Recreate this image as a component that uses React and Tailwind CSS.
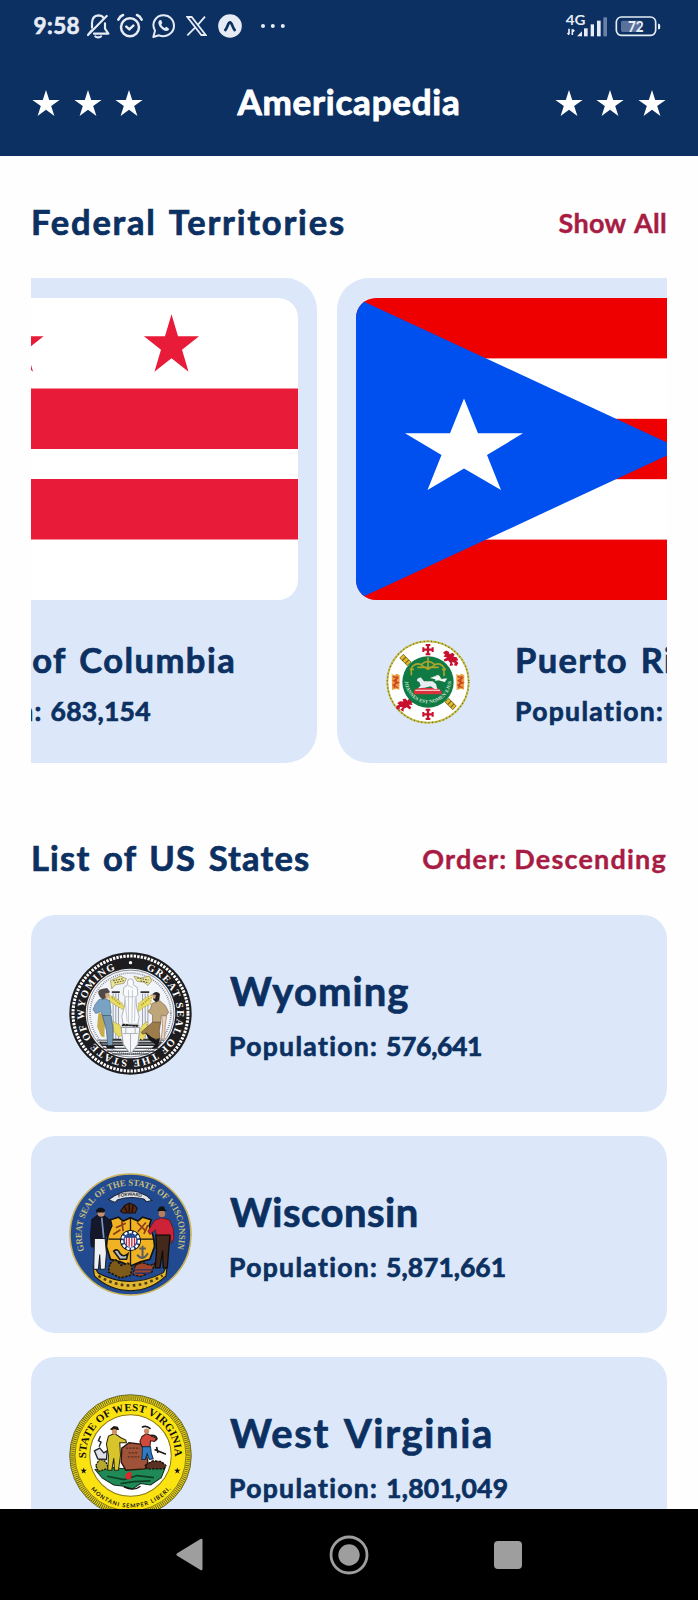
const STAR = '0,-10 2.25,-3.09 9.51,-3.09 3.63,1.18 5.88,8.09 0,3.82 -5.88,8.09 -3.63,1.18 -9.51,-3.09 -2.25,-3.09';

function HeaderStars() {
  return (
    <div className="flex gap-[15.7px] pt-[11px]">
      {[0, 1, 2].map((i) => (
        <svg key={i} className="h-[26px] w-[26px] overflow-visible" viewBox="-10 -10.3 20 20" fill="#fff">
          <polygon points={STAR} transform="scale(1.1)" />
        </svg>
      ))}
    </div>
  );
}

function StatusBar() {
  return (
    <div className="flex h-[52px] items-center pl-[33.5px] pr-[37px] text-[#e6ebf5]">
      <span className="w-[53px] text-[22.5px] font-bold leading-[26px] tracking-[0.4px] [-webkit-text-stroke:0.6px]">9:58</span>
      <svg className="h-[26px] w-[23px]" viewBox="0 0 69 78" fill="none" stroke="currentColor" strokeWidth="6.5" strokeLinecap="round" strokeLinejoin="round">
        <path d="M15 44V30C15 14 24 8 34 7C41 7 47 10 50 15M54 31V47L64 62H21M59 9L3 66L14 52" />
        <path d="M25 70C28 74 39 74 42 70" />
      </svg>
      <svg className="ml-[7.5px] h-[26px] w-[26px]" viewBox="0 0 78 78" fill="none" stroke="currentColor" strokeWidth="7.5" strokeLinecap="round" strokeLinejoin="round">
        <circle cx="39" cy="43" r="27" />
        <path d="M4 20C8 12 12 8 18 6M74 20C70 12 66 8 60 6M28 41L37 49L49 38" />
      </svg>
      <svg className="ml-[9px] h-[24px] w-[23px]" viewBox="0 0 69 72" fill="none" stroke="currentColor" strokeWidth="6" strokeLinejoin="round">
        <path d="M4 69L9 50C-4 27 12 4 35 4C53 4 66 18 66 35C66 58 42 72 21 64Z" />
        <path d="M24 18C17 22 18 31 25 40C33 50 44 55 50 48C53 44 50 42 43 38L38 42C33 40 29 36 28 31L31 27L28 19Z" fill="currentColor" stroke="none" />
      </svg>
      <svg className="ml-[11px] h-[20px] w-[21px]" viewBox="0 0 63 60" fill="none" stroke="currentColor" strokeWidth="5.5">
        <path d="M4 3H17L59 57H46ZM57 2L36 26M28 34L4 58" />
      </svg>
      <svg className="ml-[10.5px] h-[24px] w-[24px]" viewBox="0 0 72 72">
        <circle cx="36" cy="36" r="35.5" fill="currentColor" />
        <path d="M22 48C29 40 30 25 36 25C42 25 43 40 50 48" fill="none" stroke="#0b3061" strokeWidth="8" strokeLinecap="round" />
      </svg>
      <svg className="ml-[18px] h-[6px] w-[26px]" viewBox="0 0 26 6" fill="currentColor">
        <circle cx="3" cy="3" r="2" />
        <circle cx="12.8" cy="3" r="2" />
        <circle cx="22.8" cy="3" r="2" />
      </svg>
      <svg className="ml-auto h-[26px] w-[43px] overflow-visible" viewBox="647 37 129 78" fill="currentColor">
        <text x="649" y="72" fontSize="40" fontWeight="700" textLength="59" lengthAdjust="spacingAndGlyphs">4G</text>
        <path d="M659 84V101M655 96L659 102M669 103V86M669 86L675 92" fill="none" stroke="currentColor" strokeWidth="5" />
        <path d="M683 107L698 92V107Z" />
        <rect x="704" y="83" width="11" height="24" />
        <rect x="724" y="71" width="10" height="36" />
        <rect x="743" y="60" width="11" height="47" />
        <rect x="762" y="50" width="11" height="57" fill="#6a80a4" />
      </svg>
      <svg className="ml-[7.5px] h-[22px] w-[46px]" viewBox="798 43 138 66" fill="none">
        <rect x="802" y="49" width="118" height="55" rx="15" stroke="currentColor" strokeWidth="5" />
        <path d="M820 60H873V94H820Q816 94 816 88V66Q816 60 820 60Z" fill="#5a719b" />
        <path d="M927 69H930Q934 69 934 77Q934 86 930 86H927Z" fill="currentColor" />
        <text x="837" y="93" fontSize="43" fontWeight="900" fill="currentColor" textLength="47" lengthAdjust="spacingAndGlyphs">72</text>
      </svg>
    </div>
  );
}

function DistrictFlag() {
  return (
    <svg className="h-[302px] w-[563px] shrink-0 rounded-[20px]" viewBox="0 0 563 302">
      <rect width="563" height="302" fill="#fff" />
      <rect y="90.5" width="563" height="60.5" fill="#e81b39" />
      <rect y="181" width="563" height="60.5" fill="#e81b39" />
      {[126, 281, 436.5].map((x) => (
        <polygon key={x} points={STAR} fill="#e81b39" transform={`translate(${x} 48) scale(2.9 3.18)`} />
      ))}
    </svg>
  );
}

function PuertoRicoFlag() {
  return (
    <svg className="h-[302px] w-[563px] shrink-0 rounded-[20px]" viewBox="0 0 563 302">
      <rect width="563" height="302" fill="#ee0000" />
      <rect y="60.4" width="563" height="60.4" fill="#fff" />
      <rect y="181.2" width="563" height="60.4" fill="#fff" />
      <polygon points="0,0 325,151 0,302" fill="#0050f0" />
      <polygon points="108,100.5 122,135.3 167,135.3 131,157 145,192 108,170.5 71.500,192 85.500,157 49,135.300 94,135.3" fill="#fff" />
    </svg>
  );
}

function DistrictSeal() {
  return (
    <svg className="h-[84px] w-[84px] shrink-0" viewBox="0 0 84 84">
      <circle cx="42" cy="42" r="41" fill="#fff" stroke="#b99a3a" strokeWidth="2" />
      <circle cx="42" cy="42" r="28" fill="#4a7fb5" />
    </svg>
  );
}

function Lion({ transform }) {
  return (
    <path
      transform={transform}
      fill="#c8102e"
      d="M-20 -16L-12 -22L-4 -19L-2 -12L6 -16L12 -11L8 -6L17 -4L22 4L16 6L22 12L17 20L10 18L12 11L4 9L8 18L-2 20L0 12L-6 5L-16 8L-18 2L-9 -3L-19 -6L-14 -11Z"
    />
  );
}

function PuertoRicoSeal() {
  return (
    <svg className="h-[84px] w-[84px] shrink-0" viewBox="-126 -126 252 252">
      <circle r="122" fill="#fff" stroke="#c9c04a" strokeWidth="6" />
      <circle r="122" fill="none" stroke="#6b6a2a" strokeWidth="4" strokeDasharray="3 8" />
      <path d="M-80 -78L-56 -54M56 54L80 78" stroke="#6b5c14" strokeWidth="17" />
      <path d="M-79 -77L-57 -55M57 55L79 77" stroke="#e0b92c" strokeWidth="14" strokeDasharray="9 3" />
      {[-97, 97].map((y) => (
        <g key={y} transform={`translate(0 ${y})`} stroke="#c8102e" fill="none">
          <path d="M0 -15V15M-15 0H15" strokeWidth="7" />
          <path d="M-7 -14H7M-7 14H7M-14 -7V7M14 -7V7" strokeWidth="6" />
        </g>
      ))}
      {[-97, 97].map((x) => (
        <g key={x} transform={`translate(${x} 0)`}>
          <path d="M-12 -24L-4 -20L4 -25L12 -20L11 23L3 20L-11 24Z" fill="#e9a23a" />
          <path d="M-8 -16L6 -12L-6 -4L8 2L-7 9L7 18M5 -18L-5 18" stroke="#d0402c" strokeWidth="4" fill="none" />
        </g>
      ))}
      <Lion transform="translate(67 -70) scale(1.1)" />
      <Lion transform="translate(-68 68) scale(-1.1 1.1) rotate(-20)" />
      <circle r="77" fill="#0f7a43" />
      <path d="M-50 -20V-42M-50 -42Q-38 -60 -20 -52Q0 -72 20 -52Q38 -60 48 -42V-18M-20 -50L0 -38L20 -50M0 -74V-36M-32 -44H32M-55 -38H-42M42 -38H54" fill="none" stroke="#a9a52c" strokeWidth="5" />
      <path d="M-42 23L-28 18H30L42 30V37H-42Z" fill="#d9323c" />
      <path d="M-38 25H36" stroke="#f3c6c6" strokeWidth="4" />
      <path d="M-32 -10L-22 -14L-12 -2L14 -2L24 6L28 22L18 20L8 13L-10 17L-30 19L-22 11L-26 0L-33 -3Z" fill="#e9edf2" />
      <path d="M8 -12L32 -20L40 -8L56 -10L50 0M26 -20L36 -8L22 -4Z" fill="#fff" stroke="#dfe7e0" strokeWidth="2" />
      <path id="pr-motto" d="M-70 -6A70 70 0 0 0 70 -6" fill="none" />
      <text fontSize="15" fontWeight="700" fill="#cfe6d4" className="font-['Liberation_Serif']">
        <textPath href="#pr-motto" startOffset="4" textLength="212">JOANNES EST NOMEN EJUS</textPath>
      </text>
    </svg>
  );
}

function WyomingSeal() {
  return (
    <svg className="h-[123px] w-[123px] shrink-0" viewBox="-184 -184 368 368">
      <circle r="183" fill="#1d1c1f" />
      <circle r="172" fill="none" stroke="#fff" strokeWidth="9" strokeDasharray="7 3.500" />
      <circle r="134" fill="#f1f4fb" />
      <circle r="130" fill="none" stroke="#55565c" strokeWidth="2" />
      <circle r="121" fill="none" stroke="#6a6b70" strokeWidth="5" strokeDasharray="2 4" />
      <path id="wy-ring" d="M0 -139A139 139 0 0 1 0 139A139 139 0 0 1 0 -139" fill="none" />
      <text fontSize="31" fontWeight="700" fill="#fff" className="font-['Liberation_Serif']">
        <textPath href="#wy-ring" startOffset="47" textLength="780">GREAT SEAL OF THE STATE OF WYOMING</textPath>
      </text>
      <circle cx="0" cy="-152" r="5" fill="#fff" />
      <path d="M-92 86H92L84 96H-84ZM-84 104H84M-70 113H72M-55 121H55" stroke="#222" strokeWidth="3" fill="#6c6e75" />
      <path d="M-100 80H100" stroke="#888b92" strokeWidth="5" />
      <path d="M-52 -60V80M-44 -60V80M-36 -60V80M36 -60V80M44 -60V80M52 -60V80" stroke="#9da1aa" strokeWidth="3" />
      <path d="M-56 -64H-32M30 -64H56M-54 78H-28M28 78H56" stroke="#333" strokeWidth="5" />
      <path d="M-60 -98L-30 -112L-12 -104L-20 -90L-46 -86L-56 -74ZM10 -112L30 -106L56 -112L64 -98L52 -84L40 -94L20 -96Z" fill="#ece59a" stroke="#8b8a4c" strokeWidth="2" />
      <path d="M-52 -98L-24 -104M-48 -92L-20 -98M20 -106L54 -100M30 -98L54 -92" stroke="#55552e" strokeWidth="3" strokeDasharray="5 3" />
      <path d="M-66 -56L-44 -46L-24 -30L-16 -8L-40 -22L-62 -36ZM64 -56L44 -46L24 -30L22 -4L38 -18L60 -28ZM-52 24L-30 36L-22 64L-34 70L-50 54ZM50 24L34 36L24 70L36 80L48 60Z" fill="#eadc63" stroke="#a29841" strokeWidth="2" strokeDasharray="6 3" />
      <path d="M-56 -48L-28 -26M56 -46L30 -22" stroke="#8f8432" strokeWidth="3" strokeDasharray="4 3" />
      <path d="M0 -104Q8 -104 9 -94L8 -86L20 -78L22 -56L16 -50L18 -20L26 10L22 32H-22L-26 8L-18 -22L-16 -50L-22 -58L-20 -78L-8 -86L-9 -94Q-8 -104 0 -104Z" fill="#fafbfd" stroke="#a4a7af" strokeWidth="2.500" />
      <path d="M-8 -84L8 -76M-6 -70V28M6 -70L4 28M-16 -40L-10 24M14 -44L12 24M-14 -50H14" stroke="#bfc2c9" strokeWidth="2.500" />
      <path d="M-26 36H26M-24 33L22 38" stroke="#222" strokeWidth="5" strokeDasharray="8 2" />
      <path d="M-28 42H28L22 92L0 122L-22 92Z" fill="#f6f7fa" stroke="#9b9da5" strokeWidth="3" />
      <path d="M-22 60H22M0 60V120M-14 44V60M14 44V60" stroke="#b0b3ba" strokeWidth="3" />
      <path d="M-96 -2L-76 2L-78 72L-88 68L-100 40Z" fill="#c8ad4e" />
      <path d="M-94 -42Q-108 -28 -112 -12L-104 0L-88 -6L-84 6H-62L-58 -2L-62 -38L-74 -44Z" fill="#78a3c4" stroke="#4c6d86" strokeWidth="2" />
      <path d="M-84 6H-58L-52 48L-54 96H-68L-72 50Z" fill="#7397b5" stroke="#40586c" strokeWidth="2" />
      <path d="M-92 -50Q-104 -68 -86 -73L-70 -76L-62 -66L-68 -48L-84 -42Z" fill="#4f4a47" />
      <path d="M-76 -60L-64 -62L-66 -46L-74 -44Z" fill="#d8a98a" />
      <path d="M-74 96H-50L-46 104H-70Z" fill="#1d1c1f" />
      <path d="M64 -30L88 -38L104 -24L114 -4L106 8L92 4L90 28H66L66 4L52 -6L60 -14Z" fill="#bfa67a" stroke="#7b6848" strokeWidth="2" />
      <path d="M94 6L108 8L104 34L102 76H92L96 40Z" fill="#efd2bb" stroke="#98785e" strokeWidth="2" />
      <path d="M66 26H90L86 52L88 76H66L50 58L36 62L32 56Z" fill="#9c7c4a" stroke="#5e4a2c" strokeWidth="2" />
      <path d="M44 56L62 70L76 78L88 74L82 102L64 106L74 92L56 80Z" fill="#171618" />
      <path d="M66 -58Q78 -70 88 -58L86 -40L76 -34L68 -42Z" fill="#28221f" />
      <path d="M66 -56L76 -56L74 -44L66 -46Z" fill="#d6a587" />
    </svg>
  );
}

function WisconsinSeal() {
  return (
    <svg className="h-[123px] w-[123px] shrink-0" viewBox="-184 -184 368 368">
      <circle r="181" fill="#224a91" stroke="#cdb45a" strokeWidth="5" />
      <path id="wi-ring" d="M-137 50A146 146 0 1 1 137 50" fill="none" />
      <text fontSize="27" fontWeight="700" fill="#c5bd7c" className="font-['Liberation_Serif']">
        <textPath href="#wi-ring" startOffset="2" textLength="552" lengthAdjust="spacingAndGlyphs">GREAT SEAL OF THE STATE OF WISCONSIN</textPath>
      </text>
      <path d="M-66 -104L-48 -116L-26 -126Q0 -134 26 -126L48 -116L64 -102L48 -98L40 -106Q0 -116 -38 -104L-46 -96Z" fill="#dfe3ea" stroke="#1d2438" strokeWidth="3" />
      <path id="wi-banner" d="M-36 -110Q0 -122 38 -110" fill="none" />
      <text fontSize="14" fontWeight="700" fill="#1c1c1c">
        <textPath href="#wi-banner" textLength="70">FORWARD</textPath>
      </text>
      <path d="M-30 -70L-18 -86L-4 -94L12 -88L20 -78L14 -64H-22Z" fill="#58290f" stroke="#160d08" strokeWidth="3" />
      <path d="M-18 -84L-10 -66M-4 -92V-66M8 -88L4 -66" stroke="#1a0e08" strokeWidth="4" />
      <path d="M-60 -44L-36 -52L-22 -40L0 -50L22 -40L36 -52L62 -44L56 -26Q70 0 72 36L58 74L30 82L0 94L-30 82L-60 74L-72 36Q-70 0 -56 -26Z" fill="#f0b323" stroke="#15130f" strokeWidth="5" />
      <path d="M0 -50V92M-66 14H68" stroke="#15130f" strokeWidth="4" />
      <path d="M-44 -20L-14 -34M-26 -40L-22 -10M-52 0L-30 -14M20 -36L46 -10M46 -36L22 -8M52 -28L40 -2" stroke="#8a3a1c" strokeWidth="5" />
      <path d="M-50 50Q-38 40 -32 56Q-22 70 -8 58L-12 74L-32 74Z" fill="#b9bcc4" stroke="#1b1b1b" strokeWidth="5" />
      <path d="M36 34V72M20 60Q36 82 52 56M26 42H46" fill="none" stroke="#5b5c62" strokeWidth="6" />
      <circle cy="18" r="30" fill="#1d3f86" stroke="#111" strokeWidth="3" />
      <circle cy="18" r="25" fill="none" stroke="#fff" strokeWidth="7" strokeDasharray="9 5" />
      <path d="M-17 4H17V22Q14 34 0 40Q-14 34 -17 22Z" fill="#fff" />
      <path d="M-12 8V32M-4 8V37M4 8V37M12 8V32" stroke="#c2263a" strokeWidth="4" />
      <path d="M-17 2H17V10H-17Z" fill="#224a91" />
      <path d="M-112 92L-96 116Q0 166 98 114L110 92L106 124Q60 168 0 168Q-62 168 -108 124Z" fill="#e3b62f" stroke="#15130f" strokeWidth="3" />
      <path d="M-96 124Q0 182 96 122" fill="none" stroke="#4d3d10" strokeWidth="8" strokeDasharray="8 10" />
      <path d="M-62 88L-46 74L-28 92L-8 86L6 96L0 122L-30 130L-66 112Z" fill="#7e5a1a" stroke="#1a140a" strokeWidth="5" strokeDasharray="7 4" />
      <path d="M14 92L34 84L60 92L72 86L64 112L30 126L8 120Z" fill="#9f462a" stroke="#17130d" strokeWidth="4" strokeDasharray="9 3" />
      <path d="M10 106H68M14 116H60" stroke="#27336a" strokeWidth="4" />
      <path d="M-116 -46L-98 -58L-78 -56L-60 -42L-62 -10L-74 8L-78 16H-108L-106 40L-118 36L-120 4Z" fill="#15172a" stroke="#0d0f1c" strokeWidth="2" />
      <path d="M-86 -50L-80 10" stroke="#8298bf" strokeWidth="5" />
      <path d="M-108 12H-76L-72 56L-76 104H-90L-92 60L-96 104H-110Z" fill="#eef0f4" stroke="#191a22" strokeWidth="3" />
      <circle cx="-88" cy="-64" r="11" fill="#c9906c" />
      <path d="M-104 -72Q-92 -88 -76 -74L-78 -66H-102Z" fill="#10121c" />
      <path d="M72 -42L92 -50L116 -44L128 -18L130 12L122 28L118 2H78L74 -14L58 0L52 -10Z" fill="#cc2338" stroke="#4e101b" strokeWidth="2" />
      <path d="M76 2H118L114 50L110 100H98L96 48L88 100H74L78 48Z" fill="#43291c" stroke="#120c08" strokeWidth="4" />
      <circle cx="94" cy="-62" r="10" fill="#b87d5b" />
      <path d="M80 -72L88 -84H100L104 -74L110 -70H80Z" fill="#111" />
    </svg>
  );
}

function WestVirginiaSeal() {
  return (
    <svg className="h-[123px] w-[123px] shrink-0" viewBox="-184 -184 368 368">
      <circle r="182" fill="#e3cf1e" stroke="#3b3a14" strokeWidth="2" />
      <circle r="174" fill="none" stroke="#4a4715" strokeWidth="13" strokeDasharray="2 4" />
      <circle r="166" fill="#fbe211" stroke="#55501a" strokeWidth="2" />
      <circle r="122" fill="#fff" stroke="#8a7a10" strokeWidth="3" />
      <path id="wv-top" d="M-132 16A133 133 0 1 1 132 16" fill="none" />
      <text fontSize="32" fontWeight="700" fill="#111" className="font-['Liberation_Serif']">
        <textPath href="#wv-top" startOffset="8" textLength="430" lengthAdjust="spacingAndGlyphs">STATE OF WEST VIRGINIA</textPath>
      </text>
      <path id="wv-bottom" d="M-121 98A156 156 0 0 0 128 90" fill="none" />
      <text fontSize="17" fontWeight="700" fill="#111">
        <textPath href="#wv-bottom" startOffset="4" textLength="272">MONTANI SEMPER LIBERI.</textPath>
      </text>
      <polygon points={STAR} transform="translate(-140 46)" fill="#111" />
      <polygon points={STAR} transform="translate(140 46)" fill="#111" />
      <path d="M-106 42L-70 34L-20 40L60 30L104 36L92 66L60 88L30 84L6 100L-20 92L-50 88L-84 68Z" fill="#1f8a55" stroke="#10301f" strokeWidth="3" />
      <path d="M-70 62L-20 72L20 60L70 66M-30 84L10 78L60 76" stroke="#0e3f26" strokeWidth="5" fill="none" />
      <path d="M-26 -22L-4 -38L30 -34L46 -14L52 20L44 40L-14 44L-28 20Z" fill="#9f5439" stroke="#2c150c" strokeWidth="4" />
      <path d="M-14 -22H28M-6 -8H20M-8 4H26" stroke="#5f2c1b" strokeWidth="4" strokeDasharray="7 3" />
      <path d="M44 30L66 16L92 18L106 30L100 40H50Z" fill="#5b3022" stroke="#180d08" strokeWidth="4" strokeDasharray="8 3" />
      <path d="M-104 30L-92 10L-74 18L-66 38L-96 48Z" fill="#b7a92f" stroke="#16150a" strokeWidth="4" strokeDasharray="6 3" />
      <path d="M-108 -14L-92 -22L-80 -8L-70 -14L-72 12L-98 10ZM-90 -58L-96 -44L-88 -40L-94 -26" fill="#dde0e6" stroke="#22252b" strokeWidth="4" />
      <path d="M-66 -58L-48 -66L-30 -54L-14 -46L-12 -38L-32 -38L-30 0L-36 44H-48L-50 8L-56 44H-68L-66 0L-72 -34Z" fill="#d8c52c" stroke="#28240c" strokeWidth="3" />
      <path d="M-60 -80L-50 -88L-38 -86L-34 -76H-60Z" fill="#1e1a12" />
      <circle cx="-48" cy="-71" r="8" fill="#cf9167" />
      <path d="M34 -56L48 -66L64 -58L80 -50L72 -42L60 -44L58 -26H34L28 -42Z" fill="#cf4a3c" stroke="#371410" strokeWidth="3" />
      <path d="M36 -26H60L62 -8L68 10L56 12L50 -6L44 12H34Z" fill="#2f7bc4" stroke="#12304f" strokeWidth="3" />
      <circle cx="48" cy="-73" r="8" fill="#c98b68" />
      <path d="M34 -84Q46 -92 60 -80M60 -60Q84 -60 76 -46M72 -18L106 -4M78 -26L82 -8" fill="none" stroke="#1b1a18" strokeWidth="5" />
      <path d="M-16 60L-6 48L4 52L0 72L-14 70" fill="#e3262a" />
      <path d="M-20 94Q10 108 30 92" stroke="#111" strokeWidth="4" fill="none" />
    </svg>
  );
}

const territories = [
  { name: 'District of Columbia', population: '683,154', Flag: DistrictFlag, Seal: DistrictSeal, nameClass: 'tracking-[1.5px] [word-spacing:3px]' },
  { name: 'Puerto Rico', population: '3,285,874', Flag: PuertoRicoFlag, Seal: PuertoRicoSeal, nameClass: 'tracking-[1.4px] [word-spacing:3px]' },
];

const states = [
  { name: 'Wyoming', population: '576,641', Seal: WyomingSeal, nameClass: 'tracking-[1.05px]', populationClass: 'tracking-[-0.35px]' },
  { name: 'Wisconsin', population: '5,871,661', Seal: WisconsinSeal, nameClass: 'tracking-[0.5px]', populationClass: 'tracking-[0px]' },
  { name: 'West Virginia', population: '1,801,049', Seal: WestVirginiaSeal, nameClass: 'tracking-[1.65px] [word-spacing:4px]', populationClass: 'tracking-[0.25px]' },
];

function Population({ value, valueClass = 'tracking-[0.25px]' }) {
  return (
    <p className="-ml-px text-[26.5px] leading-[36px]">
      <span className="tracking-[1.35px]">Population: </span>
      <span className={valueClass}>{value}</span>
    </p>
  );
}

function SectionHeading({ title, action, titleClass, actionClass }) {
  return (
    <div className="flex h-[40px] items-center justify-between">
      <h2 className={`text-[34.5px] leading-[40px] text-[#0b3061] [word-spacing:3px] ${titleClass}`}>{title}</h2>
      <button className={`pt-px text-[27px] font-bold leading-[40px] text-[#a81c43] [-webkit-text-stroke:0.4px] ${actionClass}`}>{action}</button>
    </div>
  );
}

function TerritoryCard({ name, population, Flag, Seal, nameClass }) {
  return (
    <article className="flex h-[485px] w-[602px] shrink-0 flex-col rounded-[32px] bg-[#dce8f9] px-[19.5px] pt-[20px]">
      <Flag />
      <div className="flex flex-1 items-center pl-[30px]">
        <Seal />
        <div className="ml-[46px] flex flex-col gap-[11px] whitespace-nowrap pt-[3px]">
          <h3 className={`-ml-px text-[34.5px] leading-[44px] ${nameClass}`}>{name}</h3>
          <Population value={population} />
        </div>
      </div>
    </article>
  );
}

function StateCard({ name, population, Seal, nameClass, populationClass }) {
  return (
    <article className="flex h-[197.5px] shrink-0 items-center rounded-[24px] bg-[#dce8f9] pl-[37.5px]">
      <Seal />
      <div className="ml-[38.5px] flex flex-col gap-[13px] pt-[4px]">
        <h3 className={`text-[40px] leading-[48px] ${nameClass}`}>{name}</h3>
        <Population value={population} valueClass={populationClass} />
      </div>
    </article>
  );
}

export default function App() {
  return (
    <div className="flex h-[1600px] w-[698px] flex-col overflow-hidden bg-[#fefefe] font-[Lato,sans-serif] font-bold">
      <header className="h-[156px] shrink-0 bg-[#0b3061] text-white">
        <StatusBar />
        <div className="flex h-[104px] items-start justify-between px-[33px] pt-[28px]">
          <HeaderStars />
          <h1 className="text-[35px] leading-[42px] tracking-[0.75px] [-webkit-text-stroke:0.9px]">Americapedia</h1>
          <HeaderStars />
        </div>
      </header>

      <main className="flex min-h-0 flex-1 flex-col overflow-hidden px-[31px] pt-[46px] text-[#0b3061] [-webkit-text-stroke:0.7px]">
        <SectionHeading title="Federal Territories" action="Show All" titleClass="tracking-[1.8px]" actionClass="tracking-[0.3px] [word-spacing:2px]" />
        <section className="mt-[36px] flex h-[485px] shrink-0 justify-start gap-[19.5px] overflow-hidden">
          <div className="-ml-[316px] flex gap-[19.5px]">
            {territories.map((t) => (
              <TerritoryCard key={t.name} {...t} />
            ))}
          </div>
        </section>
        <div className="mt-[75px] shrink-0">
          <SectionHeading title="List of US States" action="Order: Descending" titleClass="tracking-[1.2px]" actionClass="tracking-[1.2px] [word-spacing:-1px]" />
        </div>
        <section className="mt-[36.5px] flex shrink-0 flex-col gap-[23.5px]">
          {states.map((s) => (
            <StateCard key={s.name} {...s} />
          ))}
        </section>
      </main>

      <nav className="flex h-[91px] shrink-0 items-center justify-between bg-black pl-[176px] pr-[176.5px]">
        <svg className="h-[33px] w-[27px]" viewBox="0 0 27 33" fill="#9e9e9e">
          <path d="M1.200 15.200L24.500 1Q26.500 0.200 26.500 2V31Q26.500 33 24.500 32L1.200 17.800Q-0.500 16.500 1.200 15.200Z" />
        </svg>
        <svg className="ml-[2px] h-[40px] w-[40px]" viewBox="0 0 40 40">
          <circle cx="20" cy="20" r="18" fill="none" stroke="#9e9e9e" strokeWidth="2.800" />
          <circle cx="20" cy="20" r="10.700" fill="#9e9e9e" />
        </svg>
        <div className="h-[28px] w-[28px] rounded-[4px] bg-[#9e9e9e]" />
      </nav>
    </div>
  );
}
